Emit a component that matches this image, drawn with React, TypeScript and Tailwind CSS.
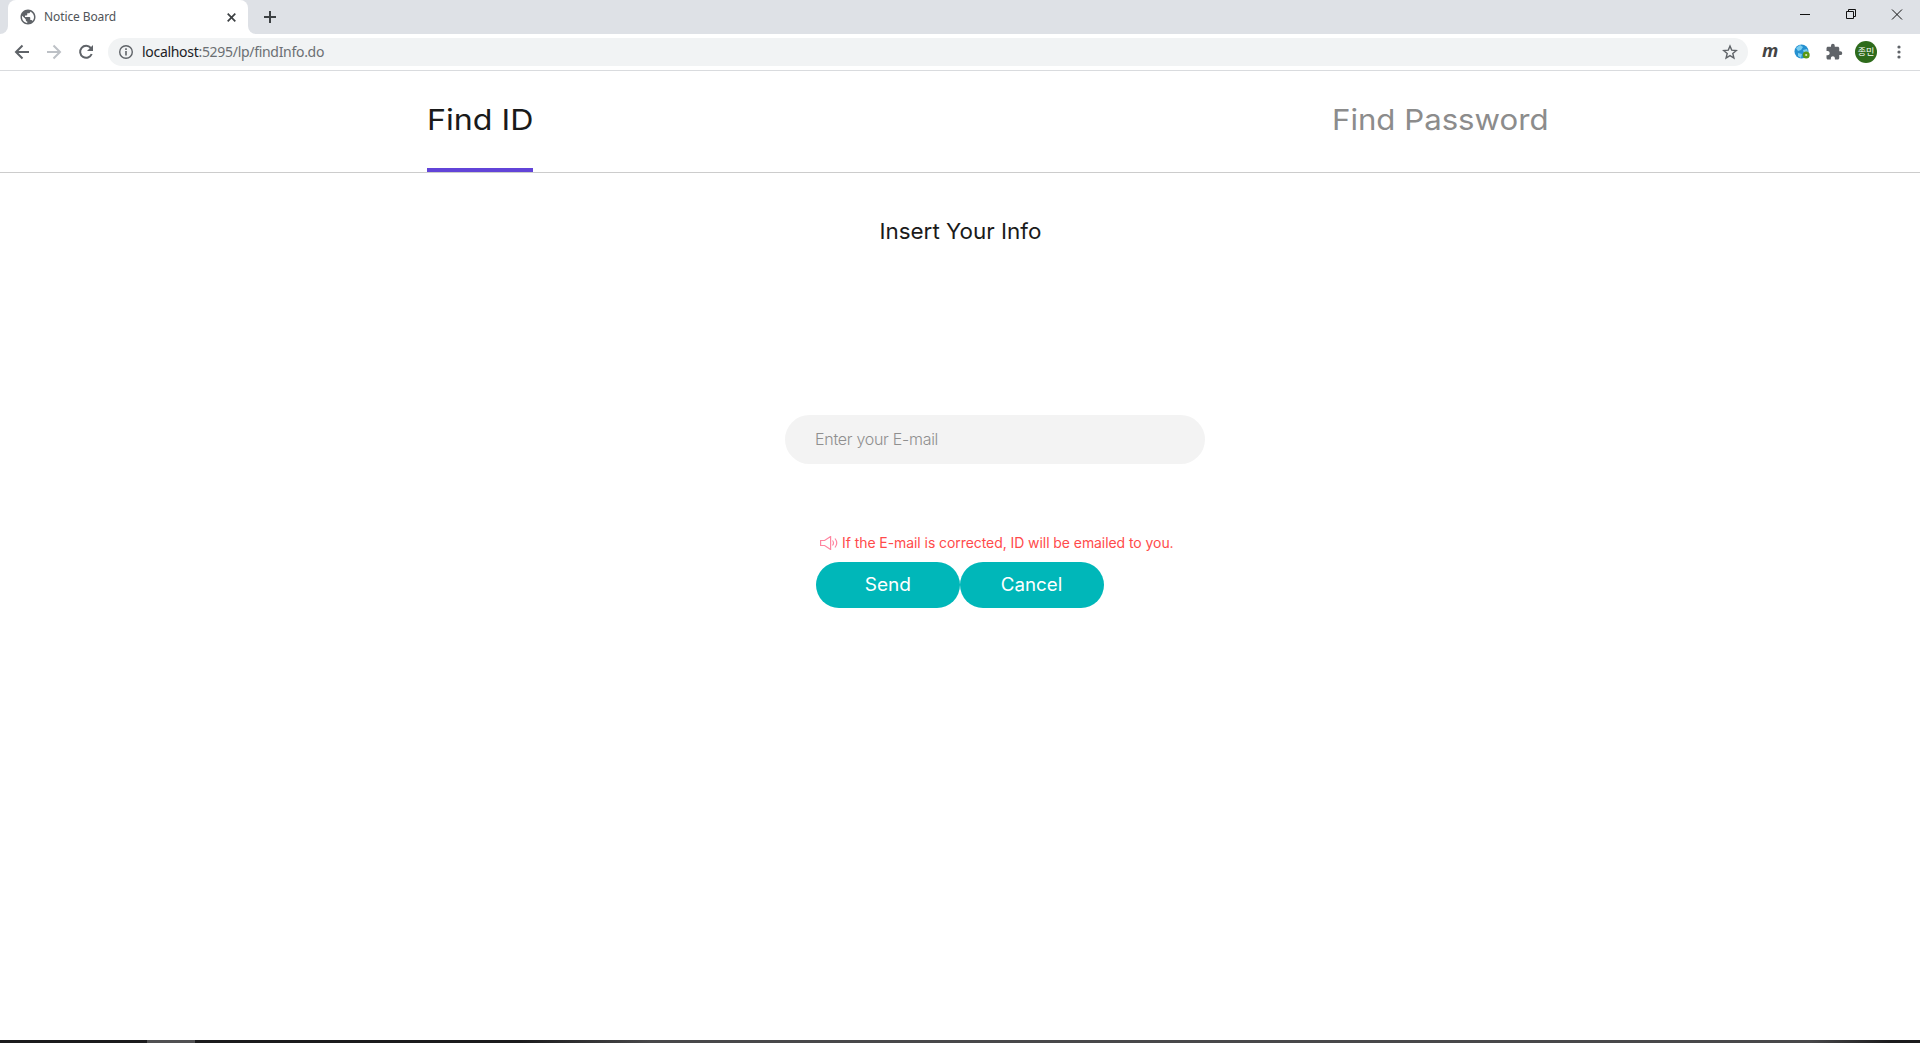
import React from "react";
import { MdExtension, MdPublic } from "react-icons/md";

function Slot({ className = "", children }: { className?: string; children: React.ReactNode }) {
  return <span className={`flex size-4 shrink-0 items-center justify-center text-[#5f6368] ${className}`}>{children}</span>;
}

function Browser() {
  return (
    <header className="shrink-0 font-['Noto_Sans',sans-serif]">
      <div className="flex h-[34px] bg-[#dee1e6]">
        <div className="flex w-2 items-end bg-white">
          <div className="h-[34px] w-2 rounded-br-lg bg-[#dee1e6]" />
        </div>
        <div className="flex h-[34px] w-60 items-center rounded-t-lg bg-white pl-3">
          <Slot><MdPublic className="size-[18px] shrink-0" /></Slot>
          <span className="ml-2 w-[180px] shrink-0 whitespace-nowrap text-[12px] tracking-[-0.1px] text-[#505458]">Notice Board</span>
          <svg className="ml-[3px] size-[9px] shrink-0" viewBox="0 0 9 9">
            <path d="M.7.7 8.300 8.300M8.300.7.7 8.300" stroke="#3c4043" strokeWidth="1.700" />
          </svg>
        </div>
        <div className="w-2 bg-white">
          <div className="h-[34px] w-2 rounded-bl-lg bg-[#dee1e6]" />
        </div>
        <svg className="ml-2 mt-[11px] size-3" viewBox="0 0 12 12">
          <path d="M6 0v12M0 6h12" stroke="#3c4043" strokeWidth="2" />
        </svg>
        <svg className="ml-auto mr-[17px] mt-[9px] h-3 w-[104px]" viewBox="0 0 104 12" fill="none" stroke="#111">
          <path d="M1 5.500h10M47.500 2.500h7v7h-7zM49.500 2.500v-2h7v7h-2M93 .5l10 10m0-10-10 10" />
        </svg>
      </div>
      <div className="flex h-9 items-center">
        <svg className="ml-[14px] size-4" viewBox="0 0 16 16" fill="none" stroke="#5f6368" strokeWidth="2">
          <path d="M15 8H2M8.500 1.500 2 8l6.500 6.500" />
        </svg>
        <svg className="ml-4 size-4" viewBox="0 0 16 16" fill="none" stroke="#bdc1c6" strokeWidth="2">
          <path d="M1 8h13M7.500 1.500 14 8l-6.500 6.500" />
        </svg>
        <svg className="ml-4 size-4" viewBox="0 0 16 16" fill="none">
          <path d="M12.800 4A6 6 0 1 0 13.700 10" stroke="#5f6368" strokeWidth="2" />
          <path d="M15 1v6H9z" fill="#5f6368" />
        </svg>
        <div className="ml-[14px] flex h-7 flex-1 items-center rounded-full bg-[#f1f3f4] pl-[11px] pr-[10px]">
          <svg className="size-[14px]" viewBox="0 0 14 14" fill="none" stroke="#5f6368">
            <circle cx="7" cy="7" r="6.300" strokeWidth="1.400" />
            <path d="M7 6v4.500M7 3.300v1.600" strokeWidth="1.600" />
          </svg>
          <span className="mb-px ml-[9px] text-[14px] tracking-[-0.3px] text-[#6b6f73]"><span className="text-[#202124]">localhost</span>:5295/lp/findInfo.do</span>
          <svg className="ml-auto size-4" viewBox="0 0 16 16" fill="none" stroke="#5f6368" strokeWidth="1.400">
            <path d="m8 2 1.700 4.100 4.600.4-3.500 3 1.100 4.500L8 11.600 4.100 14l1.100-4.500-3.500-3 4.600-.4z" />
          </svg>
        </div>
        <span className="ml-[14px] -mt-1 w-4 text-[18px] font-bold italic leading-5 tracking-[-1px] text-[#444] font-['Open_Sans',sans-serif]">m</span>
        <svg className="ml-4 size-4" viewBox="0 0 16 16">
          <circle cx="7.500" cy="7.500" r="7" fill="#2590d0" />
          <path d="m2 4 4-3 3 2-2 3-3 1zM9 6l4-1 1 3-4 1zM4 9l4 1-1 4-3-2z" fill="#79cdf0" />
          <circle cx="12.200" cy="11" r="2.300" fill="#dbe8c8" stroke="#5a9814" strokeWidth="2.400" />
        </svg>
        <Slot className="ml-4"><MdExtension className="size-[18px] shrink-0" /></Slot>
        <span className="ml-[13px] flex size-[22px] items-center justify-center rounded-full bg-[#2e6b1b] text-[9px] text-white font-['Noto_Sans_CJK_KR',sans-serif]">종민</span>
        <svg className="ml-5 mr-[19px] h-[14px] w-1" viewBox="0 0 4 14" fill="#5f6368">
          <circle cx="2" cy="2" r="1.600" /><circle cx="2" cy="7" r="1.600" /><circle cx="2" cy="12" r="1.600" />
        </svg>
      </div>
      <div className="h-px bg-[#d9dbde]" />
    </header>
  );
}

export default function App() {
  return (
    <div className="flex h-[1043px] w-[1920px] flex-col overflow-hidden bg-white font-[Inter,sans-serif]">
      <Browser />
      <nav className="flex h-[102px] shrink-0 border-b border-[#ccc] text-[29px] leading-[98px]">
        <div className="ml-[427px] h-[101px] w-[106px] whitespace-nowrap border-b-4 border-[#6244d8] text-[#1a1a1a]">
          <span className="inline-block origin-left scale-x-[1.11]">Find ID</span>
        </div>
        <div className="ml-[799px] origin-left scale-x-[1.075] whitespace-nowrap text-[#8c8c8c]">Find Password</div>
      </nav>
      <main className="flex flex-1 flex-col">
        <h1 className="mt-11 scale-x-[1.02] self-center whitespace-nowrap text-[22px] leading-7 text-[#1a1a1a]">Insert Your Info</h1>
        <input className="ml-[785px] mt-[170px] h-[49px] w-[420px] rounded-full bg-[#f3f3f3] px-[30px] pb-0.5 text-[16px] font-light tracking-[-0.28px] placeholder:text-[#8f8f8f]" placeholder="Enter your E-mail" />
        <div className="ml-[816px] mt-[68px] flex h-[22px] items-center pl-1">
          <svg className="h-[14px] w-[18px]" viewBox="0 0 18 14" fill="none" stroke="#ff85a0" strokeWidth="1.200">
            <path d="M.6 4.500h4l6-4v13l-6-4h-4zM12.500 4.500q2 2.500 0 5M15 2.500q3.500 4.500 0 9" />
          </svg>
          <span className="mb-0.5 ml-1 whitespace-nowrap text-[14px] tracking-[-0.07px] text-[#ff4b4b]">If the E-mail is corrected, ID will be emailed to you.</span>
        </div>
        <div className="ml-[816px] mt-2 flex text-[18px] text-white">
          <button className="h-[46px] w-36 rounded-full bg-[#00b7b9] pb-0.5"><span className="inline-block scale-x-[1.06]">Send</span></button>
          <button className="h-[46px] w-36 rounded-full bg-[#00b7b9] pb-0.5"><span className="inline-block scale-x-[1.04]">Cancel</span></button>
        </div>
      </main>
      <footer className="flex h-[3px] shrink-0 bg-[linear-gradient(90deg,#1b1b1d_520px,#48484a_650px,#48484a_1810px,#1b1b1d_1890px)]">
        <div className="ml-[147px] h-full w-12 bg-[#505052]" />
      </footer>
    </div>
  );
}
